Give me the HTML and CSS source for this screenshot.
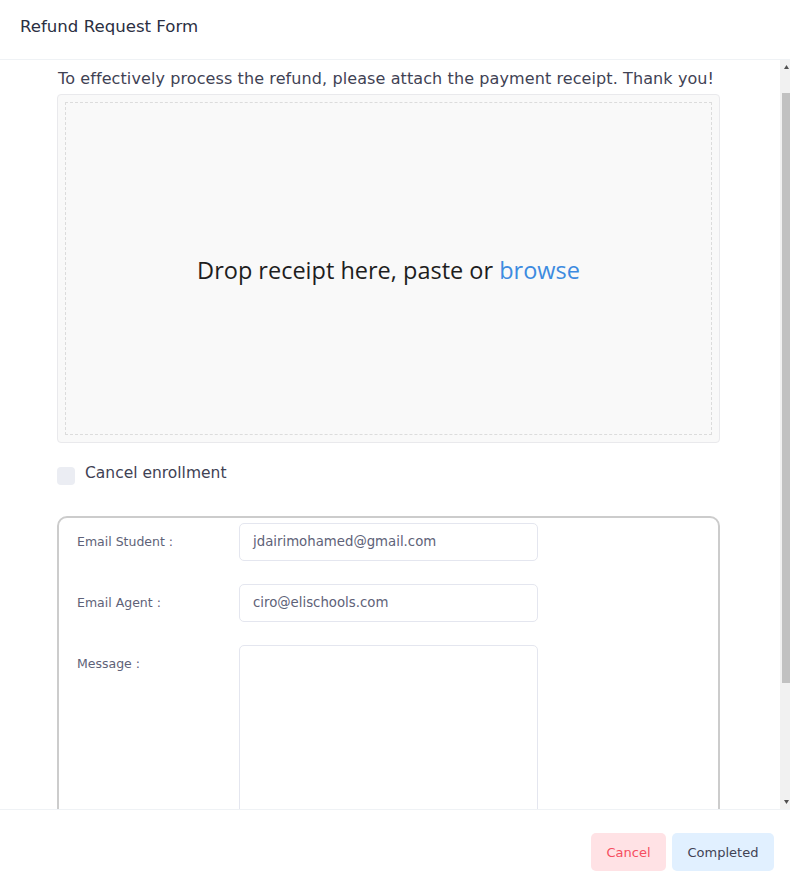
FILE: index.html
```html
<!DOCTYPE html>
<html lang="en">
<head>
<meta charset="utf-8">
<title>Refund Request Form</title>
<link rel="stylesheet" href="styles.css">
</head>
<body>
<div class="modal">
  <header class="modal-header">
    <h1 class="modal-title">Refund Request Form</h1>
  </header>
  <div class="modal-body-wrap">
    <div class="modal-body" id="modalBody">
      <div class="body-inner">
        <p class="intro">To effectively process the refund, please attach the payment receipt. Thank you!</p>
        <div class="dropzone">
          <div class="dropzone-inner">
            <span class="drop-label">Drop receipt here, paste or <span class="browse">browse</span></span>
          </div>
        </div>
        <label class="check-row">
          <span class="checkbox"></span>
          <span class="check-label">Cancel enrollment</span>
        </label>
        <div class="fieldset">
          <div class="form-row">
            <span class="field-label">Email Student :</span>
            <div class="field-input">jdairimohamed@gmail.com</div>
          </div>
          <div class="form-row">
            <span class="field-label">Email Agent :</span>
            <div class="field-input">ciro@elischools.com</div>
          </div>
          <div class="form-row">
            <span class="field-label">Message :</span>
            <div class="field-textarea"></div>
          </div>
        </div>
      </div>
    </div>
    <div class="scrollbar" aria-hidden="true">
      <svg class="sb-arrow" width="10" height="14" viewBox="0 0 10 14"><polygon points="6.5,5 9,9 4,9" fill="#505050"/></svg>
      <div class="sb-gap-top"></div>
      <div class="sb-thumb"></div>
      <div class="sb-gap-bottom"></div>
      <svg class="sb-arrow" width="10" height="14" viewBox="0 0 10 14"><polygon points="4,5 9,5 6.5,9" fill="#505050"/></svg>
    </div>
  </div>
  <footer class="modal-footer">
    <button class="btn btn-cancel">Cancel</button>
    <button class="btn btn-done">Completed</button>
  </footer>
</div>
<script src="script.js"></script>
</body>
</html>
```

FILE: styles.css
```css
* { box-sizing: border-box; }
html, body {
  margin: 0;
  padding: 0;
  background: #ffffff;
  overflow: hidden;
}
body {
  font-family: "DejaVu Sans", "Open Sans", sans-serif;
  color: #3f4254;
}
.modal {
  width: 790px;
  height: 884px;
  display: flex;
  flex-direction: column;
}
.modal-header {
  height: 60px;
  flex: 0 0 60px;
  border-bottom: 1px solid #eff2f5;
  display: flex;
  align-items: center;
  padding: 0 20px 6px;
}
.modal-title {
  margin: 0;
  font-size: 16.6px;
  font-weight: 400;
  color: #2b2f42;
}
.modal-body-wrap {
  height: 749px;
  flex: 0 0 749px;
  display: flex;
}
.modal-body {
  flex: 1 1 auto;
  overflow: hidden;
}
.scrollbar {
  width: 10px;
  flex: 0 0 10px;
  background: #f1f1f1;
  display: flex;
  flex-direction: column;
}
.sb-arrow { display: block; flex: 0 0 14px; }
.sb-gap-top { flex: 0 0 19px; }
.sb-thumb {
  flex: 0 0 590px;
  margin-left: 2px;
  background: #c1c1c1;
}
.sb-gap-bottom { flex: 1 1 auto; }
.body-inner {
  padding: 35px 60px 30px 57px;
}
.intro {
  margin: 0 0 4px 1px;
  font-size: 16px;
  line-height: 22px;
  letter-spacing: 0.1px;
  color: #3f4254;
}
.dropzone {
  height: 349px;
  background: #f9f9f9;
  border: 1px solid #e9e9ec;
  border-radius: 4px;
  padding: 7px;
}
.dropzone-inner {
  height: 100%;
  border: 1px dashed #dcdcdc;
  display: flex;
  align-items: center;
  justify-content: center;
  padding-top: 2px;
}
.drop-label {
  font-family: "Open Sans", "Noto Sans", sans-serif;
  font-size: 23.5px;
  color: #1e1e1e;
}
.browse { color: #3d8be0; }
.check-row {
  display: flex;
  align-items: flex-start;
  gap: 10px;
  margin-top: 20px;
}
.checkbox {
  width: 18px;
  height: 18px;
  margin-top: 4px;
  border-radius: 4px;
  background: #ebedf3;
  flex: 0 0 18px;
}
.check-label {
  font-size: 15.5px;
  line-height: 20px;
  color: #3f4254;
}
.fieldset {
  margin-top: 31px;
  border: 2px solid #cccccc;
  border-radius: 10px;
  padding: 5px 18px 30px;
  display: flex;
  flex-direction: column;
  gap: 23px;
}
.form-row {
  display: flex;
  align-items: flex-start;
}
.field-label {
  width: 162px;
  flex: 0 0 162px;
  font-size: 12.5px;
  line-height: 38px;
  color: #5e6278;
}
.field-input {
  width: 299px;
  height: 38px;
  border: 1px solid #e4e6ef;
  border-radius: 5px;
  padding: 0 13px;
  font-size: 13.3px;
  line-height: 36px;
  color: #5e6278;
}
.field-textarea {
  width: 299px;
  height: 230px;
  border: 1px solid #e4e6ef;
  border-radius: 5px;
}
.modal-footer {
  flex: 1 1 auto;
  border-top: 1px solid #eff2f5;
  display: flex;
  justify-content: flex-end;
  align-items: flex-start;
  gap: 6px;
  padding: 23px 16px 0;
}
.btn {
  height: 38px;
  border: none;
  border-radius: 5px;
  font-family: inherit;
  font-size: 13px;
  padding: 0;
}
.btn-cancel {
  width: 75px;
  background: #ffe2e5;
  color: #f64e60;
}
.btn-done {
  width: 102px;
  background: #e1f0ff;
  color: #3f4254;
}
```

FILE: script.js
```js
document.getElementById('modalBody').scrollTop = 27;
```
